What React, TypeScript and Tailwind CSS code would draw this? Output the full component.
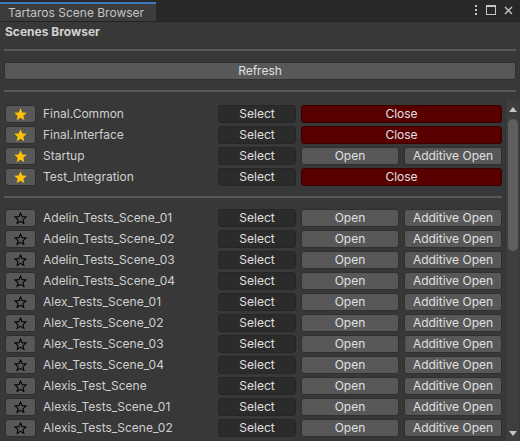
import React from "react";

type Scene = { name: string; fav: boolean; loaded?: boolean };

const favorites: Scene[] = [
  { name: "Final.Common", fav: true, loaded: true },
  { name: "Final.Interface", fav: true, loaded: true },
  { name: "Startup", fav: true },
  { name: "Test_Integration", fav: true, loaded: true },
];

const others: Scene[] = [
  "Adelin_Tests_Scene_01",
  "Adelin_Tests_Scene_02",
  "Adelin_Tests_Scene_03",
  "Adelin_Tests_Scene_04",
  "Alex_Tests_Scene_01",
  "Alex_Tests_Scene_02",
  "Alex_Tests_Scene_03",
  "Alex_Tests_Scene_04",
  "Alexis_Test_Scene",
  "Alexis_Tests_Scene_01",
  "Alexis_Tests_Scene_02",
].map((name) => ({ name, fav: false }));

const STAR = "M12 2 L14.9 8.6 L22 9.3 L16.6 14 L18.2 21 L12 17.3 L5.8 21 L7.4 14 L2 9.3 L9.1 8.6 Z";

function StarButton({ filled }: { filled: boolean }) {
  return (
    <div className="w-[31px] h-[18px] shrink-0 rounded-[3px] bg-[#585858] border border-[#2f2f2f] flex items-center justify-center">
      {filled ? (
        <svg width="15" height="15" viewBox="0 0 24 24">
          <path d={STAR} fill="#ffc107" />
        </svg>
      ) : (
        <svg width="13" height="13" viewBox="0 0 24 24">
          <path d={STAR} fill="none" stroke="#000" strokeWidth="2" />
        </svg>
      )}
    </div>
  );
}

function Btn({ label, className }: { label: string; className: string }) {
  return (
    <div className={"h-[18px] shrink-0 rounded-[3px] border flex items-center justify-center text-[12px] text-[#e0e0e0] " + className}>
      {label}
    </div>
  );
}

function Row({ scene }: { scene: Scene }) {
  return (
    <div className="flex items-center h-[18px] mb-[3px] pl-[5px]">
      <StarButton filled={scene.fav} />
      <div className="w-[175px] ml-[7px] text-[12px] text-[#cfcfcf] whitespace-nowrap overflow-hidden">{scene.name}</div>
      <Btn label="Select" className="w-[78px] bg-[#2b2b2b] border-[#262626]" />
      {scene.loaded ? (
        <Btn label="Close" className="w-[201px] ml-[5px] bg-[#580000] border-[#3a0000]" />
      ) : (
        <>
          <Btn label="Open" className="w-[98px] ml-[5px] bg-[#585858] border-[#303030]" />
          <Btn label="Additive Open" className="w-[98px] ml-[5px] bg-[#585858] border-[#303030]" />
        </>
      )}
    </div>
  );
}

export default function App() {
  return (
    <div className="w-[520px] h-[441px] bg-[#383838] flex flex-col overflow-hidden font-['Inter','Noto_Sans',sans-serif]">
      {/* tab bar */}
      <div className="h-[22px] shrink-0 bg-[#282828] border-b border-[#232323] flex items-end">
        <div className="w-[156px] h-[19px] bg-[#3c3c3c] border-t-2 border-[#3a79bb] flex items-center pl-[8px] text-[12px] text-[#c4c4c4]">
          Tartaros Scene Browser
        </div>
        <div className="flex-1" />
        <div className="flex items-center gap-[8px] h-[21px] pr-[7px] pb-[1px]">
          <svg width="4" height="10" viewBox="0 0 4 10">
            <rect x="1" y="0" width="2" height="2" fill="#c4c4c4" />
            <rect x="1" y="4" width="2" height="2" fill="#c4c4c4" />
            <rect x="1" y="8" width="2" height="2" fill="#c4c4c4" />
          </svg>
          <svg width="10" height="10" viewBox="0 0 10 10">
            <rect x="0.5" y="0.5" width="9" height="9" fill="none" stroke="#c4c4c4" />
            <rect x="0" y="0" width="10" height="2" fill="#c4c4c4" />
          </svg>
          <svg width="9" height="9" viewBox="0 0 9 9">
            <path d="M1 1 L8 8 M8 1 L1 8" stroke="#c4c4c4" strokeWidth="1.4" />
          </svg>
        </div>
      </div>

      <div className="h-[20px] shrink-0 flex items-center pl-[5px] text-[12px] font-bold text-[#d2d2d2]">Scenes Browser</div>

      <div className="mx-[4px] mt-[7px] h-[2px] bg-[#595959] shrink-0" />

      <div className="mx-[4px] mt-[11px] h-[18px] shrink-0 rounded-[3px] bg-[#585858] border border-[#303030] flex items-center justify-center text-[12px] text-[#e0e0e0]">
        Refresh
      </div>

      <div className="mx-[4px] mt-[10px] h-[2px] bg-[#595959] shrink-0" />

      <div className="flex flex-1 mt-[9px] min-h-0">
        <div className="flex-1 min-w-0 pt-[4px] overflow-hidden">
          {favorites.map((s) => (
            <Row key={s.name} scene={s} />
          ))}
          <div className="ml-[4px] w-[498px] h-[2px] bg-[#595959] mt-[10px] mb-[11px]" />
          {others.map((s) => (
            <Row key={s.name} scene={s} />
          ))}
        </div>
        <div className="w-[14px] shrink-0 bg-[#3e3e3e] border-l border-[#333333] flex flex-col items-center mr-[1px]">
          <svg width="8" height="5" viewBox="0 0 8 5" className="mt-[6px]">
            <path d="M0 5 L4 0 L8 5 Z" fill="#c4c4c4" />
          </svg>
          <div className="w-[10px] h-[132px] rounded-full bg-[#5f5f5f] mt-[7px]" />
          <div className="flex-1" />
          <svg width="8" height="5" viewBox="0 0 8 5" className="mb-[5px]">
            <path d="M0 0 L8 0 L4 5 Z" fill="#c4c4c4" />
          </svg>
        </div>
      </div>
    </div>
  );
}
